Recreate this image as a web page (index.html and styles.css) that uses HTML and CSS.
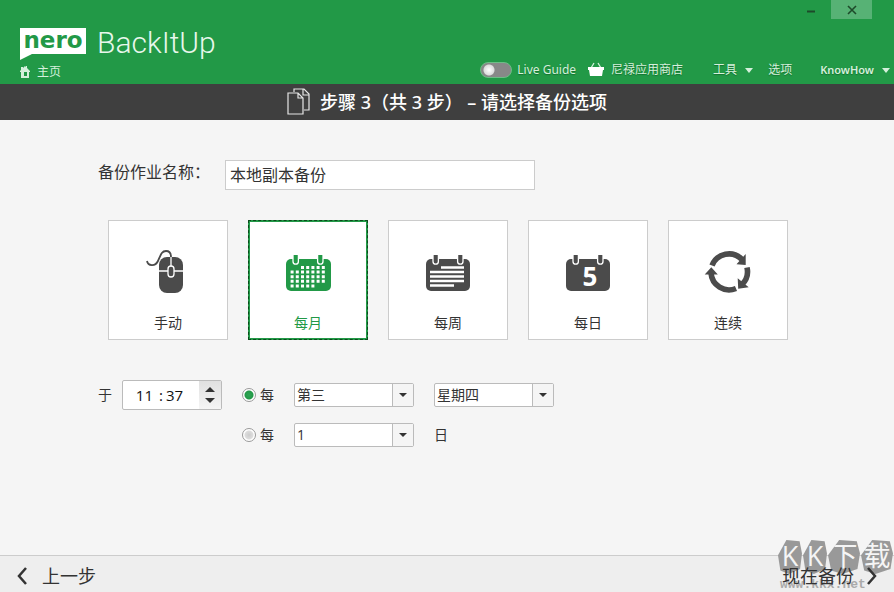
FILE: index.html
```html
<!DOCTYPE html>
<html lang="zh-CN">
<head>
    <meta charset="UTF-8">
    <meta name="viewport" content="width=device-width, initial-scale=1.0">
    <title>Nero BackItUp</title>
    <link rel="stylesheet" href="styles.css">
</head>
<body>
    <header class="header">
        <div class="brand">
            <div class="logo">
                <span class="logo-nero">nero</span>
                <span class="logo-name">BackItUp</span>
            </div>
            <a class="home" href="#">
                <svg width="12" height="12" viewBox="0 0 12 12"><path fill="#d5f0dc" fill-rule="evenodd" d="M0 5l1-1V1h2v1l2-2 1 1V0h1v2l3 3v1H9v6H1V6H0zM4 6v4h3V6z"/></svg>
                主页
            </a>
        </div>
        <div class="header-right">
            <div class="window-buttons">
                <button class="win-btn" aria-label="最小化"><svg width="8" height="12" viewBox="0 0 8 12"><path d="M0 7.500h8" stroke="#1d4a2a" stroke-width="2"/></svg></button>
                <button class="win-btn win-close" aria-label="关闭"><svg width="10" height="10" viewBox="0 0 10 10"><path d="M1 1l8 8M9 1l-8 8" stroke="#1d4a2a" stroke-width="1.6"/></svg></button>
            </div>
            <nav class="nav">
                <label class="guide"><input class="switch" type="checkbox">Live Guide</label>
                <a class="store" href="#">
                    <svg width="16" height="16" viewBox="0 0 16 16"><path d="M3 6l3-5M13 6l-3-5" stroke="#d5f0dc" stroke-width="1.3" fill="none"/><path d="M0 5h16v3h-1l-1 6H2L1 8H0z" fill="#fff"/></svg>
                    尼禄应用商店
                </a>
                <a class="tools" href="#">工具 <span class="caret"></span></a>
                <a class="options" href="#">选项</a>
                <a class="knowhow" href="#">KnowHow <span class="caret"></span></a>
            </nav>
        </div>
    </header>

    <div class="step-bar">
        <svg width="24" height="28" viewBox="0 0 24 28" fill="none" stroke="#e6e6e6" stroke-width="1.2"><path d="M7 4V1h10l5 5v16h-5M16 1v6h6"/><path d="M1 5h10l5 5v16H1zM11 5v5h5"/></svg>
        <h1>步骤 3（共 3 步） – 请选择备份选项</h1>
    </div>

    <main class="main">
        <div class="name-row">
            <label for="job-name">备份作业名称：</label>
            <input id="job-name" class="name-input" type="text" value="本地副本备份">
        </div>

        <div class="cards">
            <button class="card">
                <svg width="48" height="48" viewBox="0 0 48 48">
                    <path d="M3 13C4 18 11 19 14 13C17 6 18 3 22 3C26 3 27 5 27 9" fill="none" stroke="#4b4b4b" stroke-width="1.8"/>
                    <rect x="15" y="9" width="24" height="36" rx="8" fill="#4b4b4b"/>
                    <path d="M27 9v10M15 23h24" stroke="#fff" stroke-width="1.3"/>
                    <rect x="24" y="18" width="6" height="11" rx="3" fill="#4b4b4b" stroke="#fff" stroke-width="1.3"/>
                </svg>
                手动
            </button>
            <button class="card card-active">
                <svg width="48" height="48" viewBox="0 0 48 48">
                    <rect x="2" y="11" width="45" height="32" rx="5" fill="#229947"/>
                    <g fill="#229947" stroke="#fff" stroke-width="1.3"><path d="M9 7v6.500a2.700 2.700 0 0 0 5.400 0V7"/><path d="M33.600 7v6.500a2.700 2.700 0 0 0 5.400 0V7"/></g>
                    <path d="M17 19.500h24M6.600 24.100h35M6.600 28.700h35M6.600 33.300h35M6.600 37.900h24.500" stroke="#fff" stroke-width="3" stroke-dasharray="3 2.200"/>
                </svg>
                每月
            </button>
            <button class="card">
                <svg width="48" height="48" viewBox="0 0 48 48">
                    <rect x="2" y="11" width="44" height="32" rx="5" fill="#4b4b4b"/>
                    <g fill="#4b4b4b" stroke="#fff" stroke-width="1.300"><path d="M9 7v6.500a2.700 2.700 0 0 0 5.400 0V7"/><path d="M33.600 7v6.500a2.700 2.700 0 0 0 5.400 0V7"/></g>
                    <path d="M17 19.500h23M6 24h34M6 28.500h34M6 33h34M6 37.500h24" stroke="#fff" stroke-width="2.700"/>
                </svg>
                每周
            </button>
            <button class="card">
                <svg width="48" height="48" viewBox="0 0 48 48">
                    <rect x="2" y="11" width="44" height="32" rx="5" fill="#4b4b4b"/>
                    <g fill="#4b4b4b" stroke="#fff" stroke-width="1.300"><path d="M9 7v6.500a2.700 2.700 0 0 0 5.400 0V7"/><path d="M33.600 7v6.500a2.700 2.700 0 0 0 5.400 0V7"/></g>
                    <text class="day-number" x="26" y="38" text-anchor="middle">5</text>
                </svg>
                每日
            </button>
            <button class="card">
                <svg width="48" height="48" viewBox="0 0 48 48">
                    <path d="M8 17.500A18.200 18.200 0 0 1 38 11.500M43 19.500A18.200 18.200 0 0 1 38 36.500M32 40.500A18.200 18.200 0 0 1 7 25" fill="none" stroke="#4b4b4b" stroke-width="5.600"/>
                    <path d="M41.700 6v11l-9.200-.7zM33.700 30.300l.5 10.500 10.500-1.500zM.7 26.500L7.300 19.200l6.500 7.200z" fill="#4b4b4b"/>
                </svg>
                连续
            </button>
        </div>

        <div class="schedule">
            <div class="time">
                <label for="hour">于</label>
                <div class="time-box">
                    <input id="hour" type="text" value="11">
                    <span>:</span>
                    <input type="text" value="37" aria-label="分钟">
                    <div class="spin">
                        <button aria-label="增加"><svg width="10" height="5" viewBox="0 0 10 5"><path d="M0 5l5-5 5 5z" fill="#333"/></svg></button>
                        <button aria-label="减少"><svg width="10" height="5" viewBox="0 0 10 5"><path d="M0 0l5 5 5-5z" fill="#333"/></svg></button>
                    </div>
                </div>
            </div>
            <div class="rules">
                <div class="rule">
                    <label class="radio"><input type="radio" name="rule" checked>每</label>
                    <div class="select">
                        <select aria-label="第几周"><option>第三</option></select>
                        <span class="arrow"></span>
                    </div>
                    <div class="select">
                        <select aria-label="星期"><option>星期四</option></select>
                        <span class="arrow"></span>
                    </div>
                </div>
                <div class="rule">
                    <label class="radio"><input type="radio" name="rule">每</label>
                    <div class="select">
                        <select id="day"><option>1</option></select>
                        <span class="arrow"></span>
                    </div>
                    <label for="day">日</label>
                </div>
            </div>
        </div>
    </main>

    <footer class="footer">
        <button class="step-btn">
            <svg width="12" height="18" viewBox="0 0 12 18"><path d="M10 1L3 9l7 8" fill="none" stroke="#333" stroke-width="2.500"/></svg>
            上一步
        </button>
        <button class="step-btn">
            现在备份
            <svg width="12" height="18" viewBox="0 0 12 18"><path d="M2 1l7 8-7 8" fill="none" stroke="#333" stroke-width="2.500"/></svg>
        </button>
        <div class="watermark">
            <div class="mark-letters"><span>K</span><span>K</span><span class="wide">下</span><span class="wide">载</span></div>
            <div class="mark-url">www.kkx.net</div>
        </div>
    </footer>
</body>
</html>
```

FILE: styles.css
```css
* { box-sizing: border-box; }
body { margin: 0; min-height: 100vh; display: flex; flex-direction: column; background-color: #f5f5f5; color: #333; font-family: "Open Sans", "Noto Sans CJK SC", sans-serif; font-size: 14px; line-height: 20px; }
button, input, select { font: inherit; color: inherit; margin: 0; padding: 0; }
button { border: none; background: none; cursor: pointer; }
a { color: inherit; text-decoration: none; }
svg { display: block; flex: none; }

.header { height: 84px; display: flex; justify-content: space-between; background-color: #229947; color: #d5f0dc; font-size: 12px; line-height: 16px; }
.brand { padding: 28px 0 0 20px; }
.logo { display: flex; gap: 11px; }
.logo-nero { width: 66px; height: 32px; background-color: #fff; color: #229947; font-family: "DejaVu Sans", sans-serif; font-size: 23px; line-height: 24px; font-weight: 700; text-align: center; clip-path: polygon(0 0, 100% 0, 100% 26px, 12px 26px, 0 100%); }
.logo-name { font-family: Roboto, sans-serif; font-weight: 300; font-size: 30px; line-height: 30px; color: #e8f7ec; }
.home { display: flex; align-items: center; gap: 5px; margin-top: 4px; }
.header-right { display: flex; flex-direction: column; justify-content: space-between; }
.window-buttons { display: flex; justify-content: flex-end; padding-right: 22px; }
.win-btn { width: 41px; height: 19px; display: flex; align-items: center; justify-content: center; }
.win-close { background-color: #57b275; }
.nav { display: flex; align-items: center; height: 28px; padding-right: 4px; font-family: "Noto Sans", "Noto Sans CJK SC", sans-serif; text-shadow: 0 1px 1px #14702f; }
.nav a { display: flex; align-items: center; }
.guide { display: flex; align-items: center; gap: 5px; }
.switch { appearance: none; width: 32px; height: 16px; border: 1px solid #6dbd86; border-radius: 8px; background: radial-gradient(circle at 8px 7px, #fff 0, #ddd 5px, #888 6px); }
.store { gap: 7px; margin-left: 12px; }
.tools { gap: 8px; margin-left: 30px; }
.options { margin-left: 15px; }
.knowhow { gap: 8px; margin-left: 28px; font-size: 11px; font-weight: 600; }
.caret { border: 4px solid transparent; border-top: 5px solid #d5f0dc; border-bottom: none; }

.step-bar { height: 36px; display: flex; align-items: center; justify-content: center; gap: 9px; background-color: #3f3f3f; color: #fff; }
.step-bar h1 { margin: 0; font-family: "Noto Sans", "Noto Sans CJK SC", sans-serif; font-size: 18px; line-height: 26px; font-weight: 500; }

.main { flex: 1; padding: 40px 20px 20px 98px; }
.name-row { display: flex; font-size: 16px; line-height: 24px; }
.name-row label { width: 127px; }
.name-input { width: 310px; height: 30px; padding: 0 4px 2px; border: 1px solid #ccc; background-color: #fff; }

.cards { display: flex; gap: 20px; margin: 30px 0 0 10px; }
.card { width: 120px; height: 120px; display: flex; flex-direction: column; align-items: center; gap: 17px; padding-top: 27px; border: 1px solid #ccc; background-color: #fff; }
.card-active { padding-top: 26px; border: 2px solid #229947; outline: 1px dashed #0b4a1c; outline-offset: -1px; color: #229947; }
.day-number { font-size: 26px; font-weight: 700; fill: #fff; }

.schedule { display: flex; gap: 20px; margin-top: 40px; }
.time { display: flex; gap: 10px; line-height: 30px; }
.time-box { width: 100px; height: 30px; display: flex; border: 1px solid #bbb; border-radius: 2px; background-color: #fff; color: #111; font-size: 15px; line-height: 28px; }
.time-box input { width: 30px; border: none; background: none; text-align: right; }
.time-box span { width: 10px; text-align: right; }
.time-box span + input { width: 36px; padding-left: 3px; text-align: left; }
.spin { width: 22px; display: flex; flex-direction: column; align-items: center; justify-content: center; gap: 6px; background: linear-gradient(#e0e0e0, #f5f5f5); }
.rules { display: flex; flex-direction: column; gap: 10px; }
.rule { display: flex; align-items: center; gap: 20px; height: 30px; }
.radio { width: 32px; display: flex; align-items: center; gap: 4px; }
.radio input { appearance: none; width: 14px; height: 14px; border: 1px solid #999; border-radius: 50%; background: radial-gradient(circle, #ccc 0, #ddd 4px, #fff 5px); }
.radio input:checked { background: radial-gradient(circle, #2fa455 0, #229947 4px, #fff 5px); }
.select { width: 120px; height: 24px; display: flex; border: 1px solid #bbb; border-radius: 2px; background-color: #fff; }
.select select { flex: 1; appearance: none; border: none; background: none; padding-left: 2px; }
.arrow { width: 21px; display: flex; align-items: center; justify-content: center; border-left: 1px solid #bbb; background-color: #f5f5f5; pointer-events: none; }
.arrow::before { content: ""; border: 4px solid transparent; border-top-color: #333; border-bottom: none; }

.footer { position: relative; height: 37px; display: flex; justify-content: space-between; padding: 0 16px; border-top: 1px solid #ccc; background-color: #eee; }
.step-btn { position: relative; z-index: 1; display: flex; align-items: center; gap: 14px; padding-top: 4px; font-size: 18px; line-height: 26px; }
.step-btn:nth-child(2) { gap: 12px; }
.watermark { position: absolute; right: 1px; bottom: 0; width: 115px; color: #f5f5f5; pointer-events: none; }
.mark-letters { display: flex; gap: 1px; font-size: 27px; line-height: 32px; margin-bottom: 4px; }
.mark-letters span { width: 24px; height: 34px; background-color: #999; text-align: center; clip-path: polygon(35% 0, 90% 4%, 100% 40%, 92% 85%, 45% 100%, 10% 90%, 0 45%); }
.mark-letters .wide { width: 32px; }
.mark-url { padding-left: 2px; color: #aaa; font-family: "Liberation Mono", monospace; font-size: 13px; font-weight: 700; line-height: 14px; }
```
